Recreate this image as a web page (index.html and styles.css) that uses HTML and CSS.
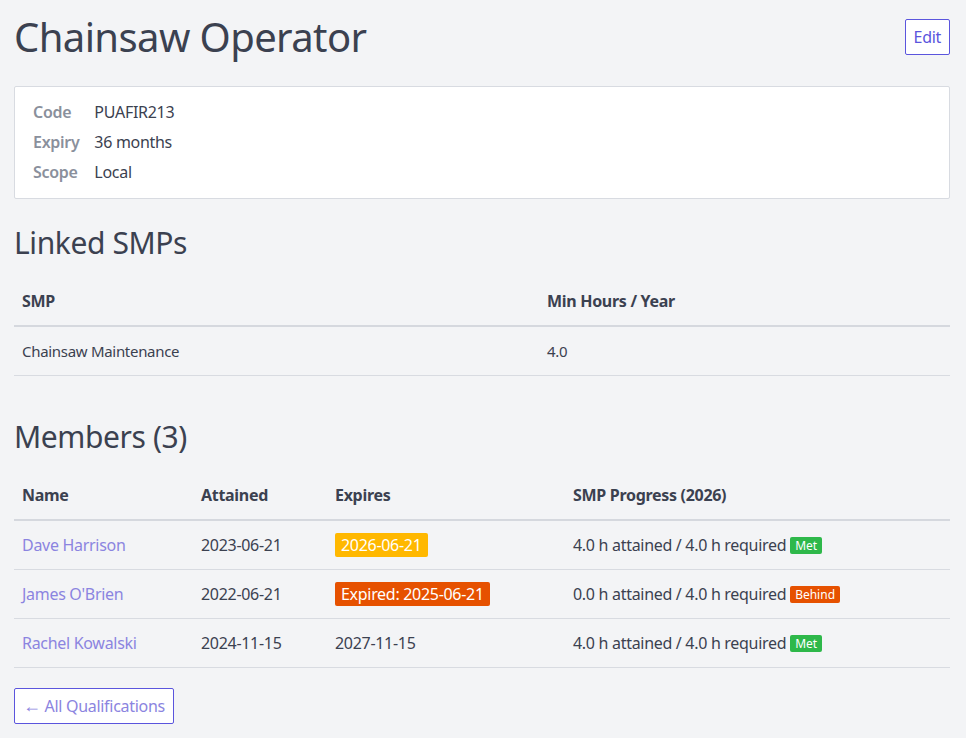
FILE: index.html
```html
<!DOCTYPE html>
<html lang="en">
<head>
    <meta charset="UTF-8">
    <meta name="viewport" content="width=device-width, initial-scale=1.0">
    <title>Chainsaw Operator</title>
    <link rel="stylesheet" href="styles.css">
</head>
<body>

    <div class="page">
        <!-- Title row -->
        <div class="page-header">
            <h1>Chainsaw Operator</h1>
            <a class="btn" href="#">Edit</a>
        </div>

        <!-- Qualification details -->
        <div class="card">
            <dl class="details">
                <dt>Code</dt><dd>PUAFIR213</dd>
                <dt>Expiry</dt><dd>36 months</dd>
                <dt>Scope</dt><dd>Local</dd>
            </dl>
        </div>

        <h2>Linked SMPs</h2>
        <table class="table smp-table">
            <thead>
                <tr>
                    <th class="col-smp">SMP</th>
                    <th>Min Hours / Year</th>
                </tr>
            </thead>
            <tbody>
                <tr>
                    <td class="small">Chainsaw Maintenance</td>
                    <td class="small">4.0</td>
                </tr>
            </tbody>
        </table>

        <h2>Members (3)</h2>
        <table class="table members-table">
            <thead>
                <tr>
                    <th class="col-name">Name</th>
                    <th class="col-attained">Attained</th>
                    <th class="col-expires">Expires</th>
                    <th>SMP Progress (2026)</th>
                </tr>
            </thead>
            <tbody>
                <tr>
                    <td><a href="#">Dave Harrison</a></td>
                    <td>2023-06-21</td>
                    <td><span class="tag warn">2026-06-21</span></td>
                    <td>4.0 h attained / 4.0 h required <span class="pill ok">Met</span></td>
                </tr>
                <tr>
                    <td><a href="#">James O'Brien</a></td>
                    <td>2022-06-21</td>
                    <td><span class="tag danger">Expired: 2025-06-21</span></td>
                    <td>0.0 h attained / 4.0 h required <span class="pill danger">Behind</span></td>
                </tr>
                <tr>
                    <td><a href="#">Rachel Kowalski</a></td>
                    <td>2024-11-15</td>
                    <td>2027-11-15</td>
                    <td>4.0 h attained / 4.0 h required <span class="pill ok">Met</span></td>
                </tr>
            </tbody>
        </table>

        <a class="btn back" href="#"><span class="arrow">&larr;</span> All Qualifications</a>
    </div>

</body>
</html>
```

FILE: styles.css
```css
body {
    margin: 0;
    font-family: "Noto Sans", "Open Sans", sans-serif;
    font-size: 16px;
    letter-spacing: -0.3px;
    background-color: #f3f4f6;
    color: #3b4150;
}
.page {
    padding: 13px 16px 20px 14px;
}
.page-header {
    display: flex;
    justify-content: space-between;
    align-items: center;
}
h1 {
    margin: 0;
    font-size: 40px;
    font-weight: 400;
    line-height: 48px;
    letter-spacing: -0.6px;
}
h2 {
    margin: 0 0 16px;
    font-size: 30px;
    font-weight: 400;
    line-height: 36px;
    letter-spacing: -0.4px;
}
a {
    color: #8b84e0;
    text-decoration: none;
}
.btn {
    display: inline-block;
    background: #fff;
    border: 1px solid #5b55dd;
    border-radius: 2px;
    padding: 0 8px;
    line-height: 34px;
    color: #5b55dd;
}
.card {
    margin: 25px 0 26px;
    background: #fff;
    border: 1px solid #d8dbe1;
    border-radius: 2px;
    padding: 10px 18px 11px;
}
.details {
    display: grid;
    grid-template-columns: auto 1fr;
    column-gap: 15px;
    margin: 0;
    line-height: 30px;
}
.details dt {
    color: #8a909c;
    font-weight: 600;
}
.details dd {
    margin: 0;
}
.table {
    width: 100%;
    border-collapse: collapse;
    margin-bottom: 43px;
}
.table th {
    text-align: left;
    font-weight: 700;
    padding: 12px 8px;
    line-height: 24px;
    border-bottom: 2px solid #d5d8de;
}
.table td {
    padding: 12px 8px;
    line-height: 24px;
    border-bottom: 1px solid #d8dbe1;
}
.table td.small {
    font-size: 15px;
}
.col-smp {
    width: 509px;
}
.members-table {
    margin-bottom: 20px;
}
.col-name {
    width: 163px;
}
.col-attained {
    width: 118px;
}
.col-expires {
    width: 222px;
}
.tag {
    display: inline-block;
    color: #fff;
    padding: 0 6px;
    border-radius: 2px;
}
.tag.warn {
    background: #ffb800;
}
.tag.danger {
    background: #e65100;
}
.pill {
    display: inline-block;
    font-size: 12px;
    letter-spacing: 0;
    line-height: 17px;
    padding: 0 5px;
    border-radius: 2px;
    color: #fff;
    vertical-align: 1px;
}
.pill.ok {
    background: #2eb84a;
}
.pill.danger {
    background: #e65100;
}
.back {
    color: #8b84e0;
    line-height: 34px;
}
.arrow {
    font-size: 18px;
    line-height: 0;
}
```
